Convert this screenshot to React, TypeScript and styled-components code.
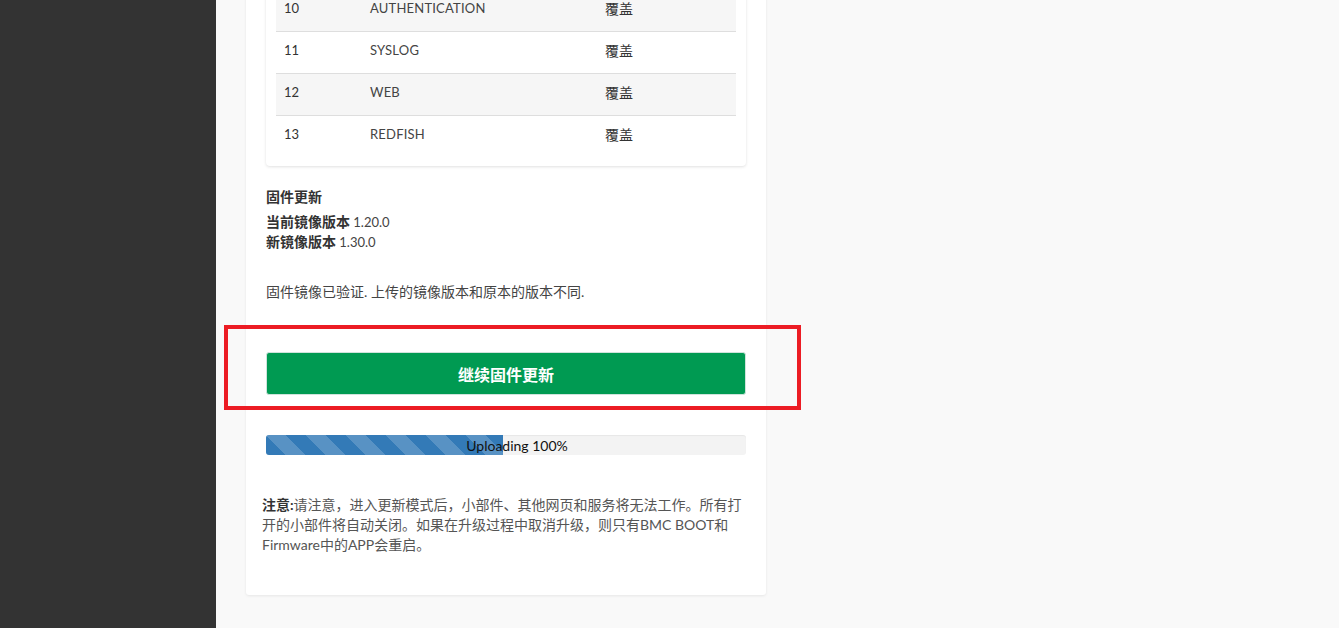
import styled, { createGlobalStyle } from "styled-components"

const GlobalStyle = createGlobalStyle`
  html, body {
    margin: 0;
    padding: 0;
    height: 100%;
    overflow: hidden;
  }
  body {
    font-family: Lato, "Noto Sans CJK SC", sans-serif;
    color: #333;
    background: #f9f9f9;
  }
`

const rows = [
  { no: 10, name: "AUTHENTICATION", action: "覆盖" },
  { no: 11, name: "SYSLOG", action: "覆盖" },
  { no: 12, name: "WEB", action: "覆盖" },
  { no: 13, name: "REDFISH", action: "覆盖" },
]

export default function App() {
  return (
    <Page>
      <GlobalStyle />
      <Sidebar />
      <Main>
        <Card>
          <TableCard>
            <Table>
              <tbody>
                {rows.map((r, i) => (
                  <Row key={r.no} $striped={i % 2 === 0} $last={i === rows.length - 1}>
                    <NoCell>{r.no}</NoCell>
                    <NameCell>{r.name}</NameCell>
                    <ActionCell>{r.action}</ActionCell>
                  </Row>
                ))}
              </tbody>
            </Table>
          </TableCard>

          <Section>
            <Heading>固件更新</Heading>
            <Line>
              <b>当前镜像版本</b> 1.20.0
            </Line>
            <Line>
              <b>新镜像版本</b> 1.30.0
            </Line>
          </Section>

          <Verified>固件镜像已验证. 上传的镜像版本和原本的版本不同.</Verified>

          <ButtonWrap>
            <ProceedButton>继续固件更新</ProceedButton>
            <Highlight />
          </ButtonWrap>

          <Progress>
            <ProgressFill style={{ width: "49.4%" }} />
            <ProgressLabel>Uploading 100%</ProgressLabel>
          </Progress>

          <Note>
            <Strong>注意:</Strong>请注意，进入更新模式后，小部件、其他网页和服务将无法工作。所有打开的小部件将自动关闭。如果在升级过程中取消升级，则只有BMC BOOT和Firmware中的APP会重启。
          </Note>
        </Card>
      </Main>
    </Page>
  )
}

const Page = styled.div`
  display: flex;
  height: 628px;
  overflow: hidden;
`

const Sidebar = styled.aside`
  width: 216px;
  flex-shrink: 0;
  background: #333333;
`

const Main = styled.main`
  flex: 1;
  background: #f9f9f9;
  padding-left: 30px;
  position: relative;
`

const Card = styled.section`
  width: 520px;
  box-sizing: border-box;
  margin-top: -20px;
  padding: 0 20px 40px;
  background: #fff;
  border-radius: 3px;
  box-shadow: 0 1px 3px rgba(0, 0, 0, 0.08);
`

const TableCard = styled.div`
  padding: 9px 10px;
  background: #fff;
  border-radius: 0 0 4px 4px;
  box-shadow: 0 1px 3px rgba(0, 0, 0, 0.12);
`

const Table = styled.table`
  width: 100%;
  border-collapse: collapse;
  font-size: 13px;
`

const Row = styled.tr<{ $striped: boolean; $last: boolean }>`
  height: 42px;
  background: ${(p) => (p.$striped ? "#f6f6f6" : "#fff")};
  border-bottom: ${(p) => (p.$last ? "none" : "1px solid #dedede")};
`

const Cell = styled.td`
  padding: 0 8px 4px;
  vertical-align: middle;
`

const NoCell = styled(Cell)`
  width: 70px;
  color: #333;
`

const NameCell = styled(Cell)`
  width: 219px;
  color: #444;
  letter-spacing: 0.2px;
`

const ActionCell = styled(Cell)`
  color: #333;
  font-size: 14px;
`

const Section = styled.div`
  margin-top: 21px;
  font-size: 13px;
  line-height: 20px;
`

const Heading = styled.div`
  font-weight: 700;
  font-size: 14px;
  margin-bottom: 5px;
  color: #333;
`

const Line = styled.div`
  color: #444;
  b {
    color: #333;
    font-size: 14px;
  }
`

const Verified = styled.p`
  margin: 30px 0 0;
  font-size: 14px;
  line-height: 20px;
  color: #444;
`

const ButtonWrap = styled.div`
  position: relative;
  margin-top: 50px;
`

const ProceedButton = styled.button`
  display: block;
  width: 100%;
  height: 43px;
  border: 1px solid #cfe3dc;
  border-radius: 3px;
  background: #009a52;
  color: #fff;
  font-family: Lato, "Noto Sans CJK SC", sans-serif;
  font-size: 16px;
  font-weight: 700;
  cursor: pointer;
`

const Highlight = styled.div`
  position: absolute;
  left: -42px;
  right: -55px;
  top: -27px;
  bottom: -15px;
  border: 4px solid #ec1c24;
  pointer-events: none;
`

const Progress = styled.div`
  position: relative;
  margin-top: 40px;
  height: 20px;
  background: #f3f3f3;
  border-radius: 3px;
  overflow: hidden;
  box-shadow: inset 0 1px 1px rgba(0, 0, 0, 0.05);
`

const ProgressFill = styled.div`
  height: 100%;
  background-color: #337ab7;
  background-image: linear-gradient(
    45deg,
    rgba(255, 255, 255, 0.18) 25%,
    transparent 25%,
    transparent 50%,
    rgba(255, 255, 255, 0.18) 50%,
    rgba(255, 255, 255, 0.18) 75%,
    transparent 75%,
    transparent
  );
  background-size: 40px 40px;
`

const ProgressLabel = styled.span`
  position: absolute;
  inset: 0;
  padding-left: 22px;
  display: flex;
  align-items: center;
  justify-content: center;
  font-size: 14px;
  color: #111;
`

const Note = styled.p`
  margin: 40px 0 0 -4px;
  font-size: 14px;
  line-height: 20px;
  color: #555;
`

const Strong = styled.strong`
  color: #333;
`
